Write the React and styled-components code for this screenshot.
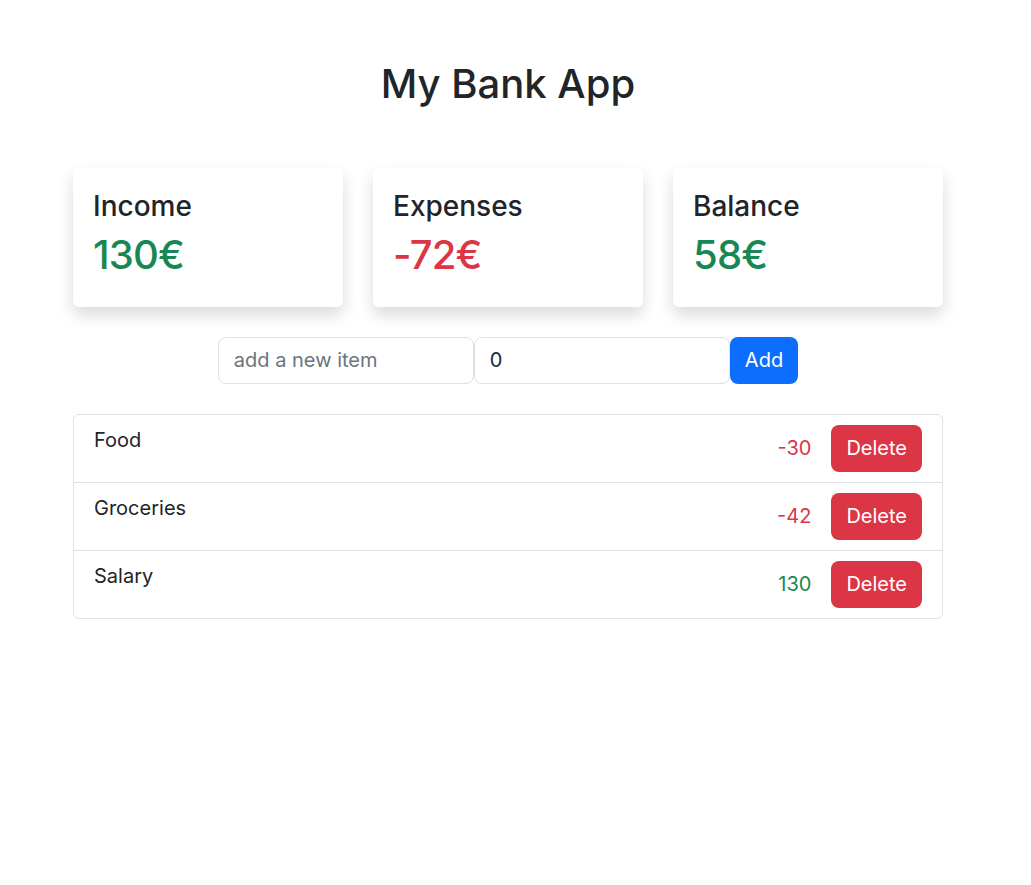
import React from "react";
import styled, { createGlobalStyle } from "styled-components";

const Global = createGlobalStyle`
  * { box-sizing: border-box; }
  html, body { margin: 0; padding: 0; background: #fff; }
  body {
    font-family: Inter, "Noto Sans", "Liberation Sans", sans-serif;
    color: #212529;
    font-size: 16px;
    line-height: 1.5;
  }
`;

const Page = styled.div`
  width: 1016px;
  padding-top: 60px;
`;

const Container = styled.div`
  width: 870px;
  margin: 0 auto;
  display: flex;
  flex-direction: column;
  align-items: stretch;
`;

const Title = styled.h1`
  margin: 0 0 60px;
  font-size: 40px;
  font-weight: 500;
  line-height: 1.2;
  text-align: center;
  color: #212529;
`;

const Cards = styled.div`
  display: grid;
  grid-template-columns: repeat(3, 1fr);
  gap: 30px;
`;

const Card = styled.div`
  background: #fff;
  border-radius: 6px;
  box-shadow: 0 8px 16px rgba(0, 0, 0, 0.15);
  padding: 22px 20px 20px;
`;

const CardTitle = styled.h3`
  margin: 0 0 7px;
  font-size: 28px;
  font-weight: 500;
  line-height: 1.2;
`;

const Amount = styled.div`
  margin: 0 0 8px;
  font-size: 40px;
  font-weight: 500;
  line-height: 1.2;
  letter-spacing: -0.02em;
  color: ${(p) => (p.$negative ? "#dc3545" : "#198754")};
`;

const Form = styled.form`
  display: flex;
  justify-content: center;
  margin: 30px 0;
`;

const Input = styled.input`
  width: 256px;
  height: 47px;
  padding: 8px 15px;
  font-family: inherit;
  font-size: 20px;
  color: #212529;
  background: #fff;
  border: 1px solid #dee2e6;
  border-radius: 8px;
  outline: none;
  &::placeholder { color: #6c757d; }
`;

const Button = styled.button`
  height: 47px;
  padding: 0 15px;
  font-family: inherit;
  font-size: 20px;
  font-weight: 400;
  line-height: 1.5;
  color: #fff;
  background: ${(p) => (p.$variant === "danger" ? "#dc3545" : "#0d6efd")};
  border: none;
  border-radius: 8px;
  cursor: pointer;
`;

const List = styled.ul`
  list-style: none;
  margin: 0;
  padding: 0;
  border: 1px solid #dee2e6;
  border-radius: 6px;
`;

const Item = styled.li`
  display: flex;
  justify-content: space-between;
  align-items: flex-start;
  padding: 10px 20px;
  font-size: 20px;
  line-height: 1.5;
  & + & { border-top: 1px solid #dee2e6; }
`;

const Name = styled.span`
  color: #212529;
`;

const Right = styled.div`
  display: flex;
  align-items: center;
  gap: 20px;
`;

const Value = styled.span`
  color: ${(p) => (p.$negative ? "#dc3545" : "#198754")};
`;

const items = [
  { name: "Food", value: -30 },
  { name: "Groceries", value: -42 },
  { name: "Salary", value: 130 },
];

export default function App() {
  return (
    <Page>
      <Global />
      <Container>
        <Title>My Bank App</Title>
        <Cards>
          <Card>
            <CardTitle>Income</CardTitle>
            <Amount>130€</Amount>
          </Card>
          <Card>
            <CardTitle>Expenses</CardTitle>
            <Amount $negative>-72€</Amount>
          </Card>
          <Card>
            <CardTitle>Balance</CardTitle>
            <Amount>58€</Amount>
          </Card>
        </Cards>
        <Form onSubmit={(e) => e.preventDefault()}>
          <Input type="text" placeholder="add a new item" />
          <Input type="number" defaultValue="0" />
          <Button type="submit">Add</Button>
        </Form>
        <List>
          {items.map((it) => (
            <Item key={it.name}>
              <Name>{it.name}</Name>
              <Right>
                <Value $negative={it.value < 0}>{it.value}</Value>
                <Button type="button" $variant="danger">Delete</Button>
              </Right>
            </Item>
          ))}
        </List>
      </Container>
    </Page>
  );
}
